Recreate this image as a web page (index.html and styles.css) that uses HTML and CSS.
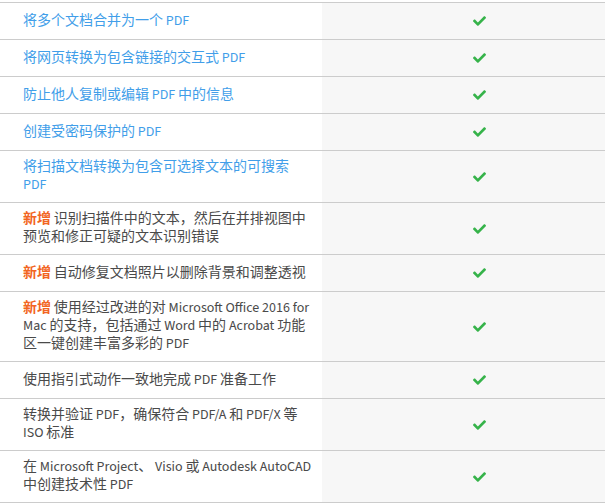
FILE: index.html
```html
<!DOCTYPE html>
<html lang="zh-CN">
<head>
<meta charset="utf-8">
<title>Acrobat 功能对比</title>
<link rel="stylesheet" href="styles.css">
</head>
<body>
<svg class="defs" width="0" height="0" aria-hidden="true">
  <symbol id="check" viewBox="0 60 512 394">
    <path d="M173.898 439.404l-166.4-166.4c-9.997-9.997-9.997-26.206 0-36.204l36.203-36.204c9.997-9.998 26.207-9.998 36.204 0L192 312.69 432.095 72.596c9.997-9.997 26.207-9.997 36.204 0l36.203 36.204c9.997 9.997 9.997 26.206 0 36.204l-294.4 294.401c-9.998 9.997-26.207 9.997-36.204-.001z"/>
  </symbol>
</svg>
<div class="table">
  <div class="row"><div class="feature link">将多个文档合并为一个 PDF</div><div class="mark"><svg class="check"><use href="#check"/></svg></div></div>
  <div class="row"><div class="feature link">将网页转换为包含链接的交互式 PDF</div><div class="mark"><svg class="check"><use href="#check"/></svg></div></div>
  <div class="row"><div class="feature link">防止他人复制或编辑 PDF 中的信息</div><div class="mark"><svg class="check"><use href="#check"/></svg></div></div>
  <div class="row"><div class="feature link">创建受密码保护的 PDF</div><div class="mark"><svg class="check"><use href="#check"/></svg></div></div>
  <div class="row"><div class="feature link">将扫描文档转换为包含可选择文本的可搜索 PDF</div><div class="mark"><svg class="check"><use href="#check"/></svg></div></div>
  <div class="row"><div class="feature"><strong class="new">新增</strong> 识别扫描件中的文本，然后在并排视图中预览和修正可疑的文本识别错误</div><div class="mark"><svg class="check"><use href="#check"/></svg></div></div>
  <div class="row"><div class="feature"><strong class="new">新增</strong> 自动修复文档照片以删除背景和调整透视</div><div class="mark"><svg class="check"><use href="#check"/></svg></div></div>
  <div class="row"><div class="feature"><strong class="new">新增</strong> 使用经过改进的对 Microsoft Office 2016 for Mac 的支持，包括通过 Word 中的 Acrobat 功能区一键创建丰富多彩的 PDF</div><div class="mark"><svg class="check"><use href="#check"/></svg></div></div>
  <div class="row"><div class="feature">使用指引式动作一致地完成 PDF 准备工作</div><div class="mark"><svg class="check"><use href="#check"/></svg></div></div>
  <div class="row"><div class="feature">转换并验证 PDF，确保符合 PDF/A 和 PDF/X 等 ISO 标准</div><div class="mark"><svg class="check"><use href="#check"/></svg></div></div>
  <div class="row"><div class="feature">在 Microsoft Project、 Visio 或 Autodesk AutoCAD 中创建技术性 PDF</div><div class="mark"><svg class="check"><use href="#check"/></svg></div></div>
</div>
</body>
</html>
```

FILE: styles.css
```css
html, body {
  margin: 0;
  padding: 0;
  background: #ffffff;
  overflow: hidden;
}

body {
  width: 605px;
  height: 504px;
  font-family: "Source Sans 3", "Source Sans Pro", "Noto Sans CJK SC", "Noto Sans", sans-serif;
  font-size: 14px;
  color: #4a4a4a;
}

.defs {
  position: absolute;
  width: 0;
  height: 0;
  overflow: hidden;
}

.table {
  margin-top: 2px;
  width: 637px;
  border-top: 1px solid #cccccc;
}

.row {
  display: grid;
  grid-template-columns: 322px 315px;
  min-height: 37px;
  box-sizing: border-box;
  border-bottom: 1px solid #cccccc;
}

.feature {
  padding: 7px 10px 8px 23px;
  line-height: 18px;
  box-sizing: border-box;
  align-self: center;
}

.link {
  color: #419ee9;
}

.new {
  color: #f26522;
  font-weight: 700;
}

.mark {
  background: #f7f7f7;
  display: flex;
  align-items: center;
  justify-content: center;
}

.check {
  width: 13px;
  height: 10px;
  fill: #36b34a;
}
```
